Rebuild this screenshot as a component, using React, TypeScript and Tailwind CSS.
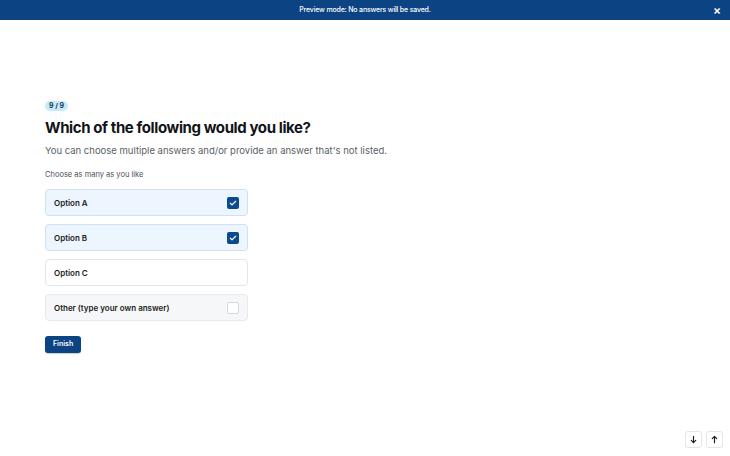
import React, { useState } from 'react';

const font = { fontFamily: 'Inter, "Noto Sans", sans-serif' };

function Check() {
  return (
    <svg viewBox="0 0 12 12" className="h-[8px] w-[8px]" fill="none">
      <path d="M2 6.3l2.6 2.5L10 3.4" stroke="white" strokeWidth="1.8" strokeLinecap="round" strokeLinejoin="round" />
    </svg>
  );
}

export default function App() {
  const [selected, setSelected] = useState<string[]>(['Option A', 'Option B']);
  const options = ['Option A', 'Option B', 'Option C', 'Other (type your own answer)'];

  const toggle = (o: string) =>
    setSelected((s) => (s.includes(o) ? s.filter((x) => x !== o) : [...s, o]));

  return (
    <div className="relative h-[456px] w-[730px] overflow-hidden bg-white" style={font}>
      {/* Preview banner */}
      <div className="flex h-[20px] items-center justify-center bg-[#0b4383] text-white">
        <span className="text-[7px] font-medium tracking-tight">Preview mode: No answers will be saved.</span>
        <button className="absolute right-[9px] top-[4px] text-[12px] leading-[12px] font-semibold">×</button>
      </div>

      <div className="pl-[45px] pt-[81px]">
        <span className="flex h-[10px] w-fit items-center rounded-full bg-[#c8ebfa] px-[4px] text-[7px] font-bold text-[#123a5c]">
          9 / 9
        </span>
        <h1 className="mt-[7px] text-[15px] leading-[20px] font-bold tracking-[-0.4px] text-[#111418]">
          Which of the following would you like?
        </h1>
        <p className="mt-[6px] text-[9.5px] leading-[14px] text-[#5a5f66]">
          You can choose multiple answers and/or provide an answer that's not listed.
        </p>
        <p className="mt-[12px] text-[7.5px] leading-[10px] text-[#4b5058]">Choose as many as you like</p>

        <div className="mt-[9px] flex w-[203px] flex-col gap-[8px]">
          {options.map((o, i) => {
            const on = selected.includes(o);
            const other = i === 3;
            return (
              <button
                key={o}
                onClick={() => toggle(o)}
                className={
                  'flex h-[27px] items-center justify-between rounded-[4px] border pl-[8px] pr-[8px] text-left ' +
                  (on
                    ? 'border-[#cfe1f7] bg-[#edf5fe]'
                    : other
                    ? 'border-[#e8eaed] bg-[#f6f7f9]'
                    : 'border-[#e3e5e8] bg-white')
                }
              >
                <span className="text-[8px] font-semibold text-[#1a1d21]">{o}</span>
                {on ? (
                  <span className="flex h-[12px] w-[12px] items-center justify-center rounded-[2px] bg-[#0b4a91]">
                    <Check />
                  </span>
                ) : other ? (
                  <span className="h-[12px] w-[12px] rounded-[2px] border border-[#d4d7dc] bg-white" />
                ) : null}
              </button>
            );
          })}
        </div>

        <button className="mt-[15px] h-[17px] rounded-[3px] bg-[#0b4383] px-[8px] text-[7px] font-semibold text-white shadow-[0_1px_1px_rgba(0,0,0,0.2)]">
          Finish
        </button>
      </div>

      {/* Navigation */}
      <div className="absolute bottom-[8px] right-[7px] flex gap-[4px]">
        <button className="flex h-[17px] w-[17px] items-center justify-center rounded-[3px] border border-[#e3e5e8] bg-white">
          <svg viewBox="0 0 10 10" className="h-[9px] w-[9px]" fill="none" stroke="#1a1d21" strokeWidth="1.3" strokeLinecap="round" strokeLinejoin="round">
            <path d="M5 1.5v7M2.5 6l2.5 2.5L7.5 6" />
          </svg>
        </button>
        <button className="flex h-[17px] w-[17px] items-center justify-center rounded-[3px] border border-[#e3e5e8] bg-white">
          <svg viewBox="0 0 10 10" className="h-[9px] w-[9px]" fill="none" stroke="#1a1d21" strokeWidth="1.3" strokeLinecap="round" strokeLinejoin="round">
            <path d="M5 8.5v-7M2.5 4L5 1.5 7.5 4" />
          </svg>
        </button>
      </div>
    </div>
  );
}
